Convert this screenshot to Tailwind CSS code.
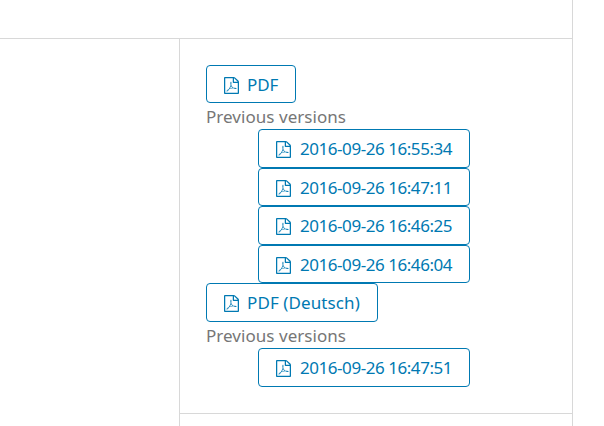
<!DOCTYPE html>
<html lang="en">
<head>
<meta charset="utf-8">
<title>Downloads</title>
<script src="https://cdn.jsdelivr.net/npm/@tailwindcss/browser@4"></script>
</head>
<body class="h-[426px] overflow-hidden bg-white font-['Noto_Sans','Open_Sans',sans-serif] text-[17px] text-[#767676]">
<svg class="hidden">
  <symbol id="pdf" viewBox="128 0 1536 1792" preserveAspectRatio="none"><path fill="currentColor" d="M1596 380q28 28 48 76t20 88v1152q0 40-28 68t-68 28h-1344q-40 0-68-28t-28-68v-1600q0-40 28-68t68-28h896q40 0 88 20t76 48zm-444-244v376h376q-10-29-22-41l-313-313q-12-12-41-22zm384 1528v-1024h-416q-40 0-68-28t-28-68v-416h-768v1536h1280zm-514-593q33 26 84 56 59-7 117-7 147 0 177 49 16 22 2 52 0 1-1 2l-2 2v1q-6 38-71 38-48 0-115-20t-130-53q-221 24-392 83-153 262-242 262-15 0-28-7l-24-12q-1-1-6-5-10-10-6-36 9-40 56-91.500t132-96.500q14-9 23 6 2 2 2 4 52-85 107-197 68-136 104-262-24-82-30.500-159.500t6.500-127.500q11-40 42-40h22q23 0 35 15 18 21 9 68-2 6-4 8 1 3 1 8v30q-2 123-14 192 55 164 146 238zm-576 411q52-24 137-158-51 40-87.500 84t-49.500 74zm398-920q-15 42-2 132 1-7 7-44 0-3 7-43 1-4 4-8-1-1-1-2-1-2-1-3-1-22-13-36 0 1-1 2v2zm-124 661q135-54 284-81-2-1-13-9.500t-16-13.500q-76-67-127-176-27 86-83 197-30 56-45 83zm646-16q-24-24-140-24 76 28 124 28 14 0 18-1 0-1-2-3z"/></symbol>
</svg>
<div class="flex h-full w-[573px] flex-col border-r border-[#d8d8d8]">
  <div class="h-[39px] shrink-0 border-b border-[#d8d8d8]"></div>
  <div class="flex grow">
    <div class="w-[179px] shrink-0"></div>
    <div class="grow border-l border-[#d8d8d8]">
      <div class="flex flex-col items-start border-b border-[#d8d8d8] px-[26px] py-[26px]">
        <a class="flex h-[38px] w-[90px] items-center gap-2 rounded border border-[#0079b2] pt-px pl-[17px] whitespace-nowrap text-[#0079b2]"><svg class="mt-px h-[17px] w-[15px] shrink-0"><use href="#pdf"/></svg><span class="leading-6 tracking-[-0.15px]">PDF</span></a>
        <p class="h-[26px] leading-[27px] tracking-[0.04px] whitespace-nowrap">Previous versions</p>
        <div class="flex flex-col pl-[52px] tracking-[-0.45px]">
          <a class="flex h-[39px] w-[212px] items-center gap-[9px] rounded border border-[#0079b2] pl-[17px] whitespace-nowrap text-[#0079b2]"><svg class="mt-px h-[17px] w-[15px] shrink-0"><use href="#pdf"/></svg><span class="leading-[25px]">2016-09-26 16:55:34</span></a>
          <a class="flex h-[38px] w-[212px] items-center gap-[9px] rounded border border-[#0079b2] pt-px pl-[17px] whitespace-nowrap text-[#0079b2]"><svg class="mt-px h-[17px] w-[15px] shrink-0"><use href="#pdf"/></svg><span class="leading-[25px]">2016-09-26 16:47:11</span></a>
          <a class="flex h-[39px] w-[212px] items-center gap-[9px] rounded border border-[#0079b2] pl-[17px] whitespace-nowrap text-[#0079b2]"><svg class="mt-px h-[17px] w-[15px] shrink-0"><use href="#pdf"/></svg><span class="leading-[25px]">2016-09-26 16:46:25</span></a>
          <a class="flex h-[38px] w-[212px] items-center gap-[9px] rounded border border-[#0079b2] pt-px pl-[17px] whitespace-nowrap text-[#0079b2]"><svg class="mt-px h-[17px] w-[15px] shrink-0"><use href="#pdf"/></svg><span class="leading-[25px]">2016-09-26 16:46:04</span></a>
        </div>
        <a class="flex h-[39px] w-[172px] items-center gap-2 rounded border border-[#0079b2] pl-[17px] whitespace-nowrap text-[#0079b2]"><svg class="mt-px h-[17px] w-[15px] shrink-0"><use href="#pdf"/></svg><span class="leading-[25px] tracking-[0.1px]">PDF (Deutsch)</span></a>
        <p class="h-[26px] leading-[27px] tracking-[0.04px] whitespace-nowrap">Previous versions</p>
        <div class="flex flex-col pl-[52px] tracking-[-0.45px]">
          <a class="flex h-[39px] w-[212px] items-center gap-[9px] rounded border border-[#0079b2] pl-[17px] whitespace-nowrap text-[#0079b2]"><svg class="mt-px h-[17px] w-[15px] shrink-0"><use href="#pdf"/></svg><span class="leading-[25px]">2016-09-26 16:47:51</span></a>
        </div>
      </div>
    </div>
  </div>
</div>
</body>
</html>
